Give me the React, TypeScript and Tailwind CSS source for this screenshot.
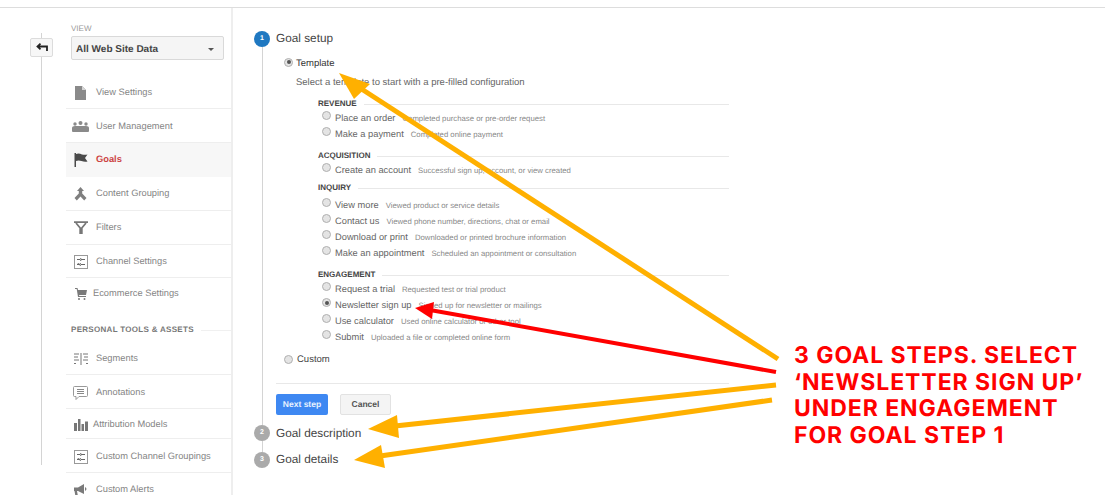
import React from "react";

const Doc = () => (
  <svg width="11" height="14" viewBox="0 0 11 14"><path d="M0 0h7l4 4v10H0z" fill="#8a8a8a" /><path d="M7 0v4h4z" fill="#d5d5d5" /></svg>
);
const Users = () => (
  <svg width="17" height="11" viewBox="0 0 17 11" fill="#8a8a8a"><circle cx="3" cy="3" r="1.7" /><circle cx="8.5" cy="2" r="2" /><circle cx="14" cy="3" r="1.7" /><path d="M0 10V7q0-2 3-2h11q3 0 3 2v3q0 1-1 1H1q-1 0-1-1z" /></svg>
);
const Flag = () => (
  <svg width="14" height="14" viewBox="0 0 14 14" fill="#4a4a4a"><rect x="0.5" y="0" width="1.5" height="14" /><path d="M2 1q3-1 6 .5 3 .7 5.500 0L11 5l2.500 3.500q-3 .7-6-.5-3-1-5.500 0z" /></svg>
);
const Grouping = () => (
  <svg width="13" height="14" viewBox="0 0 13 14" fill="#7f7f7f"><path d="M6.500 0l3.500 4H8.200v2.500L12.500 11l-2.300 2.500-3.700-4-3.700 4L.5 11l4.300-4.500V4H3z" /></svg>
);
const Funnel = () => (
  <svg width="14" height="13" viewBox="0 0 14 13" fill="none" stroke="#777" strokeWidth="1.8"><path d="M0 1.200h14M2 2l4.200 5v5.500h1.600V7L12 2" /></svg>
);
const Channel = () => (
  <svg width="14" height="14" viewBox="0 0 14 14" fill="none"><rect x="0.500" y="0.500" width="13" height="13" fill="#fff" stroke="#999" /><path d="M3 4.500h3M6 3.500l2 1-2 1M8 4.500h3M3 9.500h2M5 8.500l-2 1M11 9.500H7M7 8.500l-2 1 2 1" stroke="#666" /></svg>
);
const Cart = () => (
  <svg width="12" height="12" viewBox="0 0 12 12" fill="#7a7a7a"><path d="M0 0h2.500l.5 2h9l-1 5H4l.3 1H11v1H3L1.700 1H0z" /><circle cx="4" cy="11" r="1" /><circle cx="9.500" cy="11" r="1" /></svg>
);
const Segments = () => (
  <svg width="14" height="12" viewBox="0 0 14 12" stroke="#777" strokeWidth="1"><path d="M0 1h5M0 4h4M0 7h5M0 10.500h2M7 0v12M9 1h5M10 4h4M9 7h5M12 10.500h2" /></svg>
);
const Note = () => (
  <svg width="15" height="14" viewBox="0 0 15 14" fill="#fff" stroke="#999"><path d="M1.500.5h12a1 1 0 0 1 1 1v8a1 1 0 0 1-1 1H6l-3 3v-3H1.500a1 1 0 0 1-1-1v-8a1 1 0 0 1 1-1z" /><path d="M4 3.500h7M4 5.500h7M4 7.500h7" stroke="#888" /></svg>
);
const Bars = () => (
  <svg width="14" height="12" viewBox="0 0 14 12" fill="#777"><rect x="0" y="4" width="3" height="8" /><rect x="4" y="0" width="2.500" height="12" /><rect x="7.500" y="5" width="2.500" height="7" /><rect x="11" y="2.500" width="3" height="9.500" /></svg>
);
const Horn = () => (
  <svg width="14" height="13" viewBox="0 0 14 13" fill="#7a7a7a"><path d="M0 3.500h4L10 0v10L4 7H3l1 5.500H1.500L.5 7H0z" /><path d="M11 3q3 2 0 4z" /></svg>
);

type Item = { icon: React.ReactNode; label: string; row: string; text?: string };

const topItems: Item[] = [
  { icon: <Doc />, label: "View Settings", row: "h-[34px] pt-[2px] border-b border-[#eeeeee]", text: "ml-[7px]" },
  { icon: <Users />, label: "User Management", row: "h-[34px] pt-[2px] border-b border-[#eeeeee]", text: "ml-[7px]" },
  { icon: <Flag />, label: "Goals", row: "h-[34px] bg-[#f7f7f7]", text: "ml-[7px] font-bold text-[#cc4444]" },
  { icon: <Grouping />, label: "Content Grouping", row: "h-[34px] border-b border-[#eeeeee]", text: "ml-[7px]" },
  { icon: <Funnel />, label: "Filters", row: "h-[34px] border-b border-[#eeeeee]", text: "ml-[7px]" },
  { icon: <Channel />, label: "Channel Settings", row: "h-[33px] pt-[1px] border-b border-[#eeeeee]", text: "ml-[7px]" },
  { icon: <Cart />, label: "Ecommerce Settings", row: "h-[33px] pb-[1px]", text: "ml-[4px]" },
];
const bottomItems: Item[] = [
  { icon: <Segments />, label: "Segments", row: "h-[33px] pt-[1px] border-b border-[#eeeeee]", text: "ml-[7px]" },
  { icon: <Note />, label: "Annotations", row: "h-[34px] pt-[3px] border-b border-[#eeeeee]", text: "ml-[7px]" },
  { icon: <Bars />, label: "Attribution Models", row: "h-[30px] pt-[3px] border-b border-[#eeeeee]", text: "ml-[4px]" },
  { icon: <Channel />, label: "Custom Channel Groupings", row: "h-[34px] pt-[3px] border-b border-[#eeeeee]", text: "ml-[7px]" },
  { icon: <Horn />, label: "Custom Alerts", row: "h-[34px]", text: "ml-[7px]" },
];

function NavRow({ item }: { item: Item }) {
  return (
    <div className={`flex items-center pl-[6px] ${item.row}`}>
      <span className="flex w-[17px] justify-center">{item.icon}</span>
      <span className={`text-[9.3px] text-[#858585] ${item.text ?? ""}`}>{item.label}</span>
    </div>
  );
}

function Radio({ on = false }: { on?: boolean }) {
  return (
    <span className="flex h-[9px] w-[9px] shrink-0 items-center justify-center rounded-full border border-[#b0b0b0] bg-[#e4e4e4]">
      {on && <span className="h-[4px] w-[4px] rounded-full bg-[#555555]" />}
    </span>
  );
}

type Goal = { name: string; desc: string; on?: boolean };
type Group = { title: string; box: string; head: string; goals: Goal[] };

const groups: Group[] = [
  {
    title: "REVENUE", box: "", head: "h-[14px] pt-[2px]",
    goals: [
      { name: "Place an order", desc: "Completed purchase or pre-order request" },
      { name: "Make a payment", desc: "Completed online payment" },
    ],
  },
  {
    title: "ACQUISITION", box: "mt-[6px]", head: "h-[14px] pt-[2px]",
    goals: [{ name: "Create an account", desc: "Successful sign up, account, or view created" }],
  },
  {
    title: "INQUIRY", box: "mt-[2px]", head: "h-[14px] pt-[2px] mb-[3px]",
    goals: [
      { name: "View more", desc: "Viewed product or service details" },
      { name: "Contact us", desc: "Viewed phone number, directions, chat or email" },
      { name: "Download or print", desc: "Downloaded or printed brochure information" },
      { name: "Make an appointment", desc: "Scheduled an appointment or consultation" },
    ],
  },
  {
    title: "ENGAGEMENT", box: "mt-[6px]", head: "h-[14px] pt-[2px]",
    goals: [
      { name: "Request a trial", desc: "Requested test or trial product" },
      { name: "Newsletter sign up", desc: "Signed up for newsletter or mailings", on: true },
      { name: "Use calculator", desc: "Used online calculator or other tool" },
      { name: "Submit", desc: "Uploaded a file or completed online form" },
    ],
  },
];

function StepDot({ n, active = false }: { n: number; active?: boolean }) {
  return (
    <span className={`flex h-[16px] w-[16px] shrink-0 items-center justify-center rounded-full text-[7px] font-bold text-white ${active ? "bg-[#1f78c1]" : "bg-[#aaaaaa]"}`}>
      {n}
    </span>
  );
}

export default function App() {
  return (
    <div className="relative h-[495px] w-[1105px] overflow-hidden bg-white font-['Liberation_Sans',Arial,sans-serif] [text-rendering:geometricPrecision]">
      <div className="h-[8px] border-b border-[#dddddd]" />
      <div className="flex h-[487px]">
        {/* back column */}
        <div className="ml-[30px] flex h-[457px] w-[23px] flex-col items-center pt-[25px]">
          <div className="h-[5px] w-[1px] bg-[#d4d4d4]" />
          <div className="flex h-[19px] w-[23px] items-center justify-center rounded-[2px] border border-[#dcdcdc] bg-[#f7f7f7]">
            <svg width="12" height="9" viewBox="0 0 12 9" fill="none" stroke="#222" strokeWidth="1.800"><path d="M11 8V3.500H1.500M4.500.7L1.500 3.500l3 2.800" /></svg>
          </div>
          <div className="w-[1px] flex-1 bg-[#d4d4d4]" />
        </div>

        {/* sidebar */}
        <div className="ml-[13px] w-[167px] shrink-0 border-r-2 border-[#eeeeee]">
          <div className="ml-[5px] mt-[14px] h-[14px] text-[8px] leading-[14px] text-[#999999]">VIEW</div>
          <div className="ml-[5px] flex h-[24px] w-[153px] items-center justify-between rounded-[2px] border border-[#d9d9d9] bg-[#f5f5f5] pl-[4px] pr-[9px] pt-[2px]">
            <span className="text-[10px] font-bold text-[#444444]">All Web Site Data</span>
            <span className="h-0 w-0 border-x-[3px] border-t-[3px] border-x-transparent border-t-[#555555]" />
          </div>
          <div className="mt-[15px]">
            {topItems.map((it) => <NavRow key={it.label} item={it} />)}
          </div>
          <div className="ml-[5px] mt-[12px] flex h-[14px] items-center">
            <span className="whitespace-nowrap text-[8px] font-bold tracking-[0.3px] text-[#777777]">PERSONAL TOOLS &amp; ASSETS</span>
            <span className="ml-[7px] h-[1px] flex-1 bg-[#f0f0f0]" />
          </div>
          <div className="mt-[5px]">
            {bottomItems.map((it) => <NavRow key={it.label} item={it} />)}
          </div>
        </div>

        {/* main */}
        <div className="ml-[21px] w-[476px] shrink-0 pt-[23px]">
          {/* step 1 */}
          <div className="flex h-[394px]">
            <div className="flex w-[16px] flex-col items-center">
              <StepDot n={1} active />
              <div className="w-[1px] flex-1 bg-[#d4d4d4]" />
            </div>
            <div className="ml-[6px] flex-1">
              <div className="flex h-[16px] items-center text-[11.8px] text-[#444444]">Goal setup</div>
              <div className="ml-[8px] mt-[8px] flex h-[14px] items-center">
                <Radio on />
                <span className="ml-[3px] mt-[4px] text-[9.5px] text-[#333333]">Template</span>
              </div>
              <div className="ml-[20px] mt-[7px] h-[14px] text-[9.5px] leading-[14px] text-[#666666]">Select a template to start with a pre-filled configuration</div>
              <div className="ml-[42px] mt-[6px] w-[411px]">
                {groups.map((g) => (
                  <div key={g.title} className={g.box}>
                    <div className={`flex items-center ${g.head}`}>
                      <span className="text-[8px] font-bold text-[#444444]">{g.title}</span>
                      <span className="ml-[7px] h-[1px] flex-1 bg-[#e8e8e8]" />
                    </div>
                    {g.goals.map((r) => (
                      <div key={r.name} className="flex h-[16px] items-center whitespace-nowrap pl-[4px]">
                        <span className="-mt-[5px]"><Radio on={r.on} /></span>
                        <span className="ml-[4px] mt-[2px] text-[9.3px] text-[#666666]">{r.name}</span>
                        <span className="ml-[7px] mt-[2px] text-[7.75px] text-[#888888]">{r.desc}</span>
                      </div>
                    ))}
                  </div>
                ))}
              </div>
              <div className="ml-[8px] mt-[7px] flex h-[14px] items-center">
                <Radio />
                <span className="ml-[4px] mt-[2px] text-[9.5px] text-[#444444]">Custom</span>
              </div>
              <div className="mt-[17px] h-[1px] w-[453px] bg-[#e8e8e8]" />
              <div className="mt-[10px] flex gap-[12px]">
                <div className="flex h-[21px] w-[52px] items-center justify-center rounded-[2px] bg-[#3e88f2] text-[8.5px] font-bold text-[#e8f2ff]">Next step</div>
                <div className="flex h-[21px] w-[51px] items-center justify-center rounded-[2px] border border-[#e2e2e2] bg-[#f4f4f4] text-[8.5px] font-bold text-[#555555]">Cancel</div>
              </div>
            </div>
          </div>
          {/* step 2 */}
          <div className="flex h-[27px]">
            <div className="flex w-[16px] flex-col items-center">
              <StepDot n={2} />
              <div className="w-[1px] flex-1 bg-[#d4d4d4]" />
            </div>
            <div className="ml-[6px] flex h-[18px] items-center text-[11.8px] text-[#444444]">Goal description</div>
          </div>
          {/* step 3 */}
          <div className="flex">
            <StepDot n={3} />
            <div className="ml-[6px] flex h-[16px] items-center text-[11.8px] text-[#444444]">Goal details</div>
          </div>
        </div>
      </div>

      {/* annotation arrows, lying over the page */}
      <svg className="absolute left-0 top-0" width="1105" height="495" viewBox="0 0 1105 495" fill="none">
        <line x1="778" y1="359" x2="360" y2="88" stroke="#ffb000" strokeWidth="5" />
        <polygon points="339,73 370,84 354,99" fill="#ffb000" />
        <line x1="776" y1="372" x2="430" y2="310" stroke="#ff0000" strokeWidth="4" />
        <polygon points="415,308 434,302 432,319" fill="#ff0000" />
        <line x1="776" y1="385" x2="395" y2="426" stroke="#ffb000" strokeWidth="5" />
        <polygon points="368,429 397,415 399,438" fill="#ffb000" />
        <line x1="772" y1="400" x2="380" y2="456" stroke="#ffb000" strokeWidth="5" />
        <polygon points="354,460 381,445 385,468" fill="#ffb000" />
      </svg>
      <div className="absolute left-[794px] top-[342px] whitespace-nowrap font-['Inter',sans-serif] text-[23px] font-bold leading-[26.500px] tracking-[0.95px] text-[#ff0000]">
        <div>3 GOAL STEPS. SELECT</div>
        <div>‘NEWSLETTER SIGN UP’</div>
        <div>UNDER ENGAGEMENT</div>
        <div>FOR GOAL STEP 1</div>
      </div>
    </div>
  );
}
